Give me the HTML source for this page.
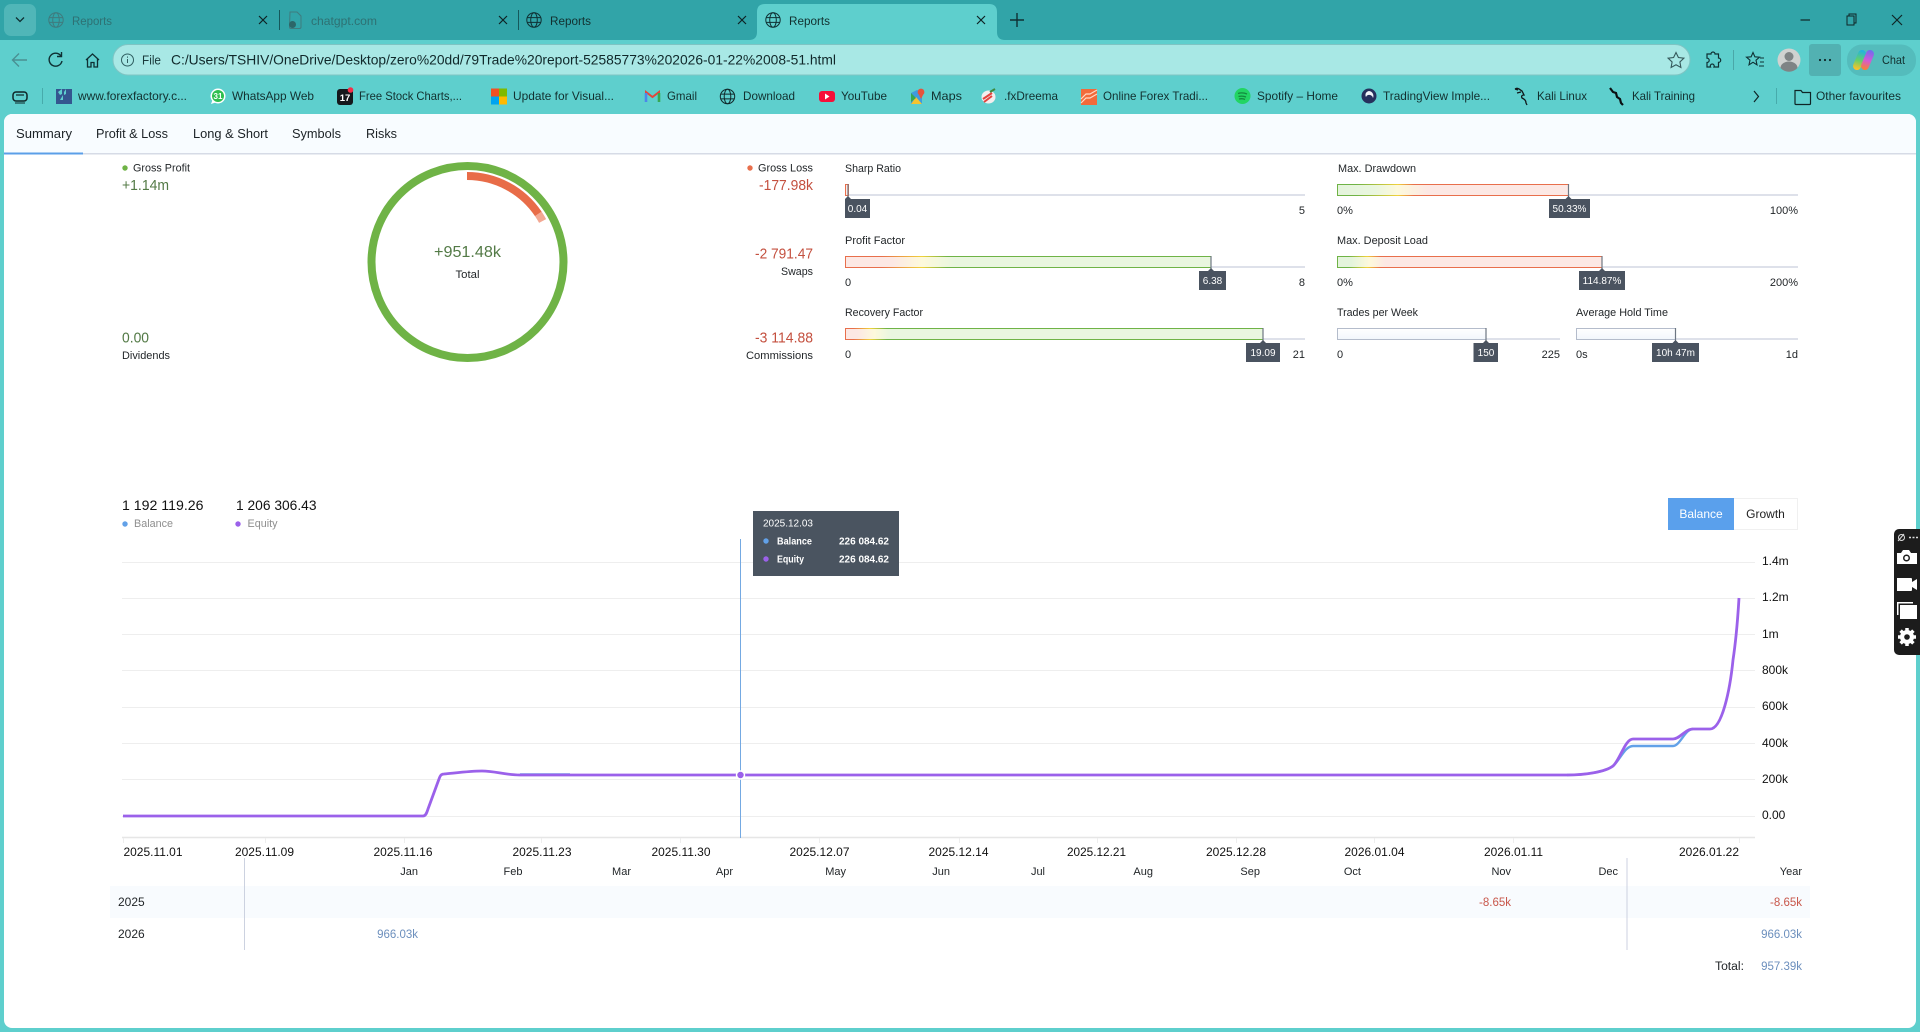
<!DOCTYPE html>
<html><head><meta charset="utf-8"><title>Reports</title>
<style>
html,body{margin:0;padding:0;background:#fff;overflow:hidden;width:1920px;height:1032px}
svg{display:block;position:absolute;left:0;top:0}
text{font-family:"Liberation Sans",sans-serif;font-size:11px;fill:#1f2326}
.t{font-size:12px;fill:#12302f}
.nav{font-size:13px;fill:#1c2226}
.g{fill:#537a46;font-size:15px}
.r{fill:#c4503f;font-size:15px}
.w{fill:#fff;font-size:10px}
.ax{font-size:12px;fill:#111}
.blu{fill:#6c8fbd;font-size:11.5px}
.red{fill:#c8574b;font-size:11.5px}
</style></head><body>
<svg width="1920" height="1032" viewBox="0 0 1920 1032" xmlns="http://www.w3.org/2000/svg">
<defs>
<symbol id="globe" viewBox="0 0 16 16" overflow="visible"><g fill="none" stroke-width="1"><circle cx="8" cy="8" r="7.2"/><ellipse cx="8" cy="8" rx="3.3" ry="7.2"/><path d="M1 5.6H15M1 10.4H15"/></g></symbol>
<linearGradient id="fPF" gradientUnits="userSpaceOnUse" x1="845" x2="1211"><stop offset=".13" stop-color="#fce8e4"/><stop offset=".21" stop-color="#fdf9dc"/><stop offset=".3" stop-color="#e9f6df"/></linearGradient>
<linearGradient id="sPF" gradientUnits="userSpaceOnUse" x1="845" x2="1211"><stop offset=".1" stop-color="#e86f4c"/><stop offset=".21" stop-color="#f0d23c"/><stop offset=".28" stop-color="#6fb346"/></linearGradient>
<linearGradient id="fRF" gradientUnits="userSpaceOnUse" x1="845" x2="1263"><stop offset=".03" stop-color="#fce8e4"/><stop offset=".07" stop-color="#fdf9dc"/><stop offset=".11" stop-color="#e9f6df"/></linearGradient>
<linearGradient id="sRF" gradientUnits="userSpaceOnUse" x1="845" x2="1263"><stop offset=".02" stop-color="#e86f4c"/><stop offset=".06" stop-color="#f0d23c"/><stop offset=".1" stop-color="#6fb346"/></linearGradient>
<linearGradient id="fMD" gradientUnits="userSpaceOnUse" x1="1338" x2="1568"><stop offset="0" stop-color="#e4f4dc"/><stop offset=".16" stop-color="#e9f6df"/><stop offset=".26" stop-color="#fdf9dc"/><stop offset=".39" stop-color="#fce8e4"/></linearGradient>
<linearGradient id="sMD" gradientUnits="userSpaceOnUse" x1="1338" x2="1568"><stop offset=".08" stop-color="#6fb346"/><stop offset=".26" stop-color="#f0d23c"/><stop offset=".33" stop-color="#e86f4c"/></linearGradient>
<linearGradient id="fDL" gradientUnits="userSpaceOnUse" x1="1338" x2="1602"><stop offset=".05" stop-color="#e4f4dc"/><stop offset=".12" stop-color="#fdf9dc"/><stop offset=".18" stop-color="#fce8e4"/></linearGradient>
<linearGradient id="sDL" gradientUnits="userSpaceOnUse" x1="1338" x2="1602"><stop offset=".04" stop-color="#6fb346"/><stop offset=".11" stop-color="#f0d23c"/><stop offset=".16" stop-color="#e86f4c"/></linearGradient>
<linearGradient id="fN" x1="0" x2="0" y1="0" y2="1"><stop offset="0" stop-color="#fff"/><stop offset="1" stop-color="#f2f6fc"/></linearGradient>
<linearGradient id="cop" gradientUnits="userSpaceOnUse" x1="1862" y1="50" x2="1857" y2="69"><stop offset="0" stop-color="#1fb2e6"/><stop offset=".55" stop-color="#64d06a"/><stop offset="1" stop-color="#f8c22a"/></linearGradient>
<linearGradient id="cop2" gradientUnits="userSpaceOnUse" x1="1870" y1="50" x2="1865" y2="69"><stop offset="0" stop-color="#6e6cf0"/><stop offset=".55" stop-color="#d25ad6"/><stop offset="1" stop-color="#f5803a"/></linearGradient>
</defs>

<!-- chrome background -->
<rect width="1920" height="1032" fill="#5ecfcd"/>
<rect width="1920" height="40" fill="#31a4a8"/>

<!-- tabs -->
<rect x="4" y="4" width="32" height="32" rx="7" fill="#50b6b8"/>
<path d="M16 17.5l4 4 4-4" fill="none" stroke="#0f3033" stroke-width="1.3"/>
<use href="#globe" x="48" y="12" width="16" height="16" stroke="#3f7b7e"/>
<text x="72" y="25" class="t" style="fill:#2e7173" textLength="40" lengthAdjust="spacingAndGlyphs">Reports</text>
<path d="M259 16l8 8M267 16l-8 8" stroke="#0e2224" stroke-width="1.2"/>
<path d="M279.500 10V30" stroke="#15585b"/>
<path d="M290 12h7l4 4v11a1.500 1.500 0 0 1-1.500 1.500H291a1.500 1.500 0 0 1-1.500-1.500z" fill="none" stroke="#3f7b7e"/>
<circle cx="292.500" cy="24.500" r="3.500" fill="#2c6668"/>
<text x="311" y="25" class="t" style="fill:#2e7173" textLength="66" lengthAdjust="spacingAndGlyphs">chatgpt.com</text>
<path d="M499 16l8 8M507 16l-8 8" stroke="#0e2224" stroke-width="1.2"/>
<path d="M518.500 10V30" stroke="#15585b"/>
<use href="#globe" x="526" y="12" width="16" height="16" stroke="#0f3033"/>
<text x="550" y="25" class="t" textLength="41" lengthAdjust="spacingAndGlyphs">Reports</text>
<path d="M738 16l8 8M746 16l-8 8" stroke="#0e2224" stroke-width="1.2"/>
<path d="M749 40Q757 40 757 32V12Q757 4 765 4H989Q997 4 997 12V32Q997 40 1005 40Z" fill="#5ecfcd"/>
<use href="#globe" x="765" y="12" width="16" height="16" stroke="#0f3033"/>
<text x="789" y="25" class="t" textLength="41" lengthAdjust="spacingAndGlyphs">Reports</text>
<path d="M977 16l8 8M985 16l-8 8" stroke="#0e2224" stroke-width="1.2"/>
<path d="M1017 13V27M1010 20H1024" stroke="#0f3033" stroke-width="1.4"/>
<!-- window controls -->
<path d="M1800.500 20H1810" stroke="#0f2526" stroke-width="1.200"/>
<path d="M1847 16h7v9h-7zM1849 16v-2h7v9h-2" fill="none" stroke="#0f2526" stroke-width="1"/>
<path d="M1892 15l10 10M1902 15l-10 10" stroke="#0f2526" stroke-width="1.200"/>

<!-- nav row -->
<path d="M27 60H13M19 53.500L12.500 60L19 66.500" fill="none" stroke="#4a8f92" stroke-width="1.400"/>
<path d="M61 56a6.500 6.500 0 1 0 1 5M61.500 52v4.500H57" fill="none" stroke="#0f3033" stroke-width="1.400"/>
<path d="M86 60l6.500-6 6.500 6M87.500 59v8h3.500v-4.500h3V67h3.500v-8" fill="none" stroke="#0f3033" stroke-width="1.300"/>
<rect x="113" y="44.500" width="1577" height="30.500" rx="15" fill="#a8e8e5" stroke="#7fc4c3"/>
<circle cx="127.500" cy="60" r="6" fill="none" stroke="#2f5e60"/><path d="M127.500 59v4M127.500 56.500v1.200" stroke="#2f5e60"/>
<text x="142" y="64.500" style="font-size:12.500px;fill:#1a3a3b" textLength="19" lengthAdjust="spacingAndGlyphs">File</text>
<text x="171" y="64.500" style="font-size:14px;fill:#10282a" textLength="665" lengthAdjust="spacingAndGlyphs">C:/Users/TSHIV/OneDrive/Desktop/zero%20dd/79Trade%20report-52585773%202026-01-22%2008-51.html</text>
<path d="M1676 52.500l2.400 5 5.500.700-4 3.800 1 5.500-4.900-2.700-4.900 2.700 1-5.500-4-3.800 5.500-.700z" fill="none" stroke="#35595b" stroke-width="1.100"/>
<path d="M1707 54h4a2 2 0 1 1 4 0h3.500v4a2.200 2.200 0 1 1 0 4.400V67H1714a2 2 0 1 0-3.500 0H1707v-4.500a2.200 2.200 0 1 0 0-4.400z" fill="none" stroke="#0f3033" stroke-width="1.200"/>
<path d="M1733.500 50V70" stroke="#4aa7a8"/>
<path d="M1753 52.500l1.900 4.300 4.600.400-3.500 3 1 4.600-4-2.500-4 2.500 1-4.600-3.500-3 4.600-.400zM1760 58h4M1760 62h4M1759 66h5" fill="none" stroke="#0f3033" stroke-width="1.100"/>
<circle cx="1789" cy="60" r="11.500" fill="#d0d2d0"/><circle cx="1789" cy="56.500" r="4.500" fill="#7f8485"/><path d="M1780.500 68a8.500 6.500 0 0 1 17 0a11.500 11.500 0 0 1-17 0z" fill="#7f8485"/>
<rect x="1809" y="44" width="32" height="32" rx="3" fill="#52b1b2"/>
<circle cx="1820" cy="60" r="1.100" fill="#10282a"/><circle cx="1825" cy="60" r="1.100" fill="#10282a"/><circle cx="1830" cy="60" r="1.100" fill="#10282a"/>
<rect x="1847" y="44.500" width="69" height="31.500" rx="15" fill="#54bcbc"/>
<path d="M1862 54L1857 66" fill="none" stroke="url(#cop)" stroke-width="8" stroke-linecap="round"/>
<path d="M1870 54L1865 66" fill="none" stroke="url(#cop2)" stroke-width="8" stroke-linecap="round"/>
<text x="1882" y="64" class="t" textLength="23" lengthAdjust="spacingAndGlyphs">Chat</text>

<!-- bookmarks -->
<rect x="13" y="92" width="14" height="9" rx="3" fill="none" stroke="#0f2526" stroke-width="1.500"/><path d="M16 95h8" stroke="#0f2526" stroke-width="1.200"/><path d="M15 103h10" stroke="#0f2526" stroke-width="1"/>
<path d="M42.500 88V104" stroke="#47abab"/>
<rect x="56" y="89" width="16" height="15" fill="#34568f"/><path d="M58 92l4-3v5l-2 1zM60 100l3-5v5zM66 89v5l-2 1v-3z" fill="#5fd0cf"/>
<text x="78" y="100" class="t" textLength="109" lengthAdjust="spacingAndGlyphs">www.forexfactory.c...</text>
<circle cx="218" cy="96" r="7.500" fill="#fff"/><circle cx="218" cy="96" r="6" fill="#2fbf4f"/><path d="M211 104l1.500-4 3 2.500z" fill="#fff"/>
<text x="218" y="99" style="font-size:8px;font-weight:bold;fill:#fff" text-anchor="middle">31</text>
<text x="232" y="100" class="t" textLength="82" lengthAdjust="spacingAndGlyphs">WhatsApp Web</text>
<rect x="337" y="89" width="16" height="16" rx="3" fill="#15181c"/><circle cx="350.500" cy="90" r="2.800" fill="#f3304a"/>
<text x="345" y="101" style="font-size:9.500px;font-weight:bold;fill:#fff" text-anchor="middle">17</text>
<text x="359" y="100" class="t" textLength="103" lengthAdjust="spacingAndGlyphs">Free Stock Charts,...</text>
<rect x="491" y="88.500" width="8" height="8" fill="#f25022"/><rect x="499" y="88.500" width="8" height="8" fill="#7fba00"/><rect x="491" y="96.500" width="8" height="8" fill="#00a4ef"/><rect x="499" y="96.500" width="8" height="8" fill="#ffb900"/>
<text x="513" y="100" class="t" textLength="101" lengthAdjust="spacingAndGlyphs">Update for Visual...</text>
<path d="M646 102V92l6.500 5 6.500-5v10" fill="none" stroke="#e5453a" stroke-width="2"/><path d="M646 93v9" stroke="#4b88ea" stroke-width="2.600"/><path d="M659 93v9" stroke="#36a853" stroke-width="2.600"/>
<text x="667" y="100" class="t" textLength="30" lengthAdjust="spacingAndGlyphs">Gmail</text>
<use href="#globe" x="719.500" y="88.500" width="16" height="16" stroke="#10282a"/>
<text x="743" y="100" class="t" textLength="52" lengthAdjust="spacingAndGlyphs">Download</text>
<rect x="819" y="91" width="16" height="11" rx="3" fill="#f70f39"/><path d="M825 93.500l4.500 3-4.500 3z" fill="#fff"/>
<text x="841" y="100" class="t" textLength="46" lengthAdjust="spacingAndGlyphs">YouTube</text>
<path d="M911 93l6-3 5 2v12l-6-2-5 2z" fill="#3f9bde"/><path d="M911 104l5-7 6 7z" fill="#f4c430"/><path d="M911 93l5 5-5 4z" fill="#35a853"/><circle cx="921" cy="92" r="3.400" fill="#e5533d"/><path d="M918.500 94l2.500 5 2.500-5z" fill="#e5533d"/>
<text x="931" y="100" class="t" textLength="31" lengthAdjust="spacingAndGlyphs">Maps</text>
<ellipse cx="988.500" cy="97" rx="7" ry="6.500" fill="#f3eeee"/><path d="M983 99l9-6M984 102l8-6" stroke="#e5433d" stroke-width="2"/><path d="M990 92l5-3" stroke="#3e8a3f" stroke-width="2"/>
<text x="1004" y="100" class="t" textLength="54" lengthAdjust="spacingAndGlyphs">.fxDreema</text>
<rect x="1081" y="89" width="16" height="16" fill="#f26a3b"/><path d="M1081 99l5-5h4l7-4M1081 103l5-5h4l7-4" fill="none" stroke="#ffd9c6" stroke-width="1.200"/>
<text x="1103" y="100" class="t" textLength="105" lengthAdjust="spacingAndGlyphs">Online Forex Tradi...</text>
<circle cx="1242.500" cy="96" r="8" fill="#22d563"/><path d="M1238 93.500q4.500-1.500 9 .5M1238.500 96.500q4-1 7.500.5M1239 99q3.500-.8 6 .5" fill="none" stroke="#128a3e" stroke-width="1.300"/>
<text x="1257" y="100" class="t" textLength="81" lengthAdjust="spacingAndGlyphs">Spotify – Home</text>
<circle cx="1369" cy="96" r="7.500" fill="#26305c"/><path d="M1369 91a5 5 0 0 1 4 7a4 4 0 0 0-5-3 3 3 0 0 0-2 2 4 4 0 0 1 3-6z" fill="#f2f4f8"/>
<text x="1383" y="100" class="t" textLength="107" lengthAdjust="spacingAndGlyphs">TradingView Imple...</text>
<path d="M1515 89c3-2 5 1 7 2l2 4c-2 0-3 1-2 3 2 1 4 2 4 5l1 2M1515 89l3 1M1517 93l4-1" fill="none" stroke="#10181a" stroke-width="1.300"/>
<text x="1537" y="100" class="t" textLength="50" lengthAdjust="spacingAndGlyphs">Kali Linux</text>
<path d="M1610 88l3 4 3 1 1 4 3 2 1 4 2 2" fill="none" stroke="#0b1012" stroke-width="2.200"/>
<text x="1632" y="100" class="t" textLength="63" lengthAdjust="spacingAndGlyphs">Kali Training</text>
<path d="M1754 91l4.500 5.500-4.500 5.500" fill="none" stroke="#0f2526" stroke-width="1.200"/>
<path d="M1776.500 88V104" stroke="#47abab"/>
<path d="M1795 90.500h6l1.500 2h8v11a1 1 0 0 1-1 1h-13.500a1 1 0 0 1-1-1z" fill="none" stroke="#0f2526" stroke-width="1.200"/>
<text x="1816" y="100" class="t" textLength="85" lengthAdjust="spacingAndGlyphs">Other favourites</text>

<!-- content -->
<path d="M12 114H1908a8 8 0 0 1 8 8V1020a8 8 0 0 1-8 8H12a8 8 0 0 1-8-8V122a8 8 0 0 1 8-8z" fill="#fff"/>
<path d="M4 153V122a8 8 0 0 1 8-8H1908a8 8 0 0 1 8 8V153z" fill="#f8fcff"/>
<rect x="4" y="153" width="1912" height="1.500" fill="#d6dbe6"/>
<rect x="4" y="152.500" width="79" height="2" fill="#5b9fe8"/>
<text x="16" y="138" class="nav" textLength="56" lengthAdjust="spacingAndGlyphs">Summary</text>
<text x="96" y="138" class="nav" textLength="72" lengthAdjust="spacingAndGlyphs">Profit &amp; Loss</text>
<text x="193" y="138" class="nav" textLength="75" lengthAdjust="spacingAndGlyphs">Long &amp; Short</text>
<text x="292" y="138" class="nav" textLength="49" lengthAdjust="spacingAndGlyphs">Symbols</text>
<text x="366" y="138" class="nav" textLength="31" lengthAdjust="spacingAndGlyphs">Risks</text>

<!-- left column -->
<circle cx="125" cy="168" r="2.700" fill="#6fb346"/>
<text x="133" y="171.500" textLength="57" lengthAdjust="spacingAndGlyphs">Gross Profit</text>
<text x="122" y="190" class="g" textLength="47" lengthAdjust="spacingAndGlyphs">+1.14m</text>
<text x="122" y="342.500" class="g" textLength="27" lengthAdjust="spacingAndGlyphs">0.00</text>
<text x="122" y="359" textLength="48" lengthAdjust="spacingAndGlyphs">Dividends</text>
<circle cx="750" cy="168" r="2.700" fill="#e86f4c"/>
<text x="758" y="171.500" textLength="55" lengthAdjust="spacingAndGlyphs">Gross Loss</text>
<text x="759" y="190" class="r" textLength="54" lengthAdjust="spacingAndGlyphs">-177.98k</text>
<text x="755" y="258.500" class="r" textLength="58" lengthAdjust="spacingAndGlyphs">-2 791.47</text>
<text x="781" y="275" textLength="32" lengthAdjust="spacingAndGlyphs">Swaps</text>
<text x="755" y="342.500" class="r" textLength="58" lengthAdjust="spacingAndGlyphs">-3 114.88</text>
<text x="746" y="359" textLength="67" lengthAdjust="spacingAndGlyphs">Commissions</text>

<!-- donut -->
<circle cx="467.500" cy="262" r="96" fill="none" stroke="#6fb346" stroke-width="8"/>
<path d="M538.300 213.900A86 86 0 0 1 542.600 221" fill="none" stroke="#f3a893" stroke-width="8"/>
<path d="M467 176A86 86 0 0 1 538.300 213.900" fill="none" stroke="#e86c48" stroke-width="8"/>
<text x="434" y="257" style="font-size:16px;fill:#537a46" textLength="67" lengthAdjust="spacingAndGlyphs">+951.48k</text>
<text x="455.500" y="278" textLength="24" lengthAdjust="spacingAndGlyphs">Total</text>

<!-- Sharp -->
<text x="845" y="172" textLength="56" lengthAdjust="spacingAndGlyphs">Sharp Ratio</text>
<path d="M845 195H1305" stroke="#d3d7e4" stroke-width="1.500"/>
<rect x="845.500" y="184.500" width="3" height="11" fill="#fde8e3" stroke="#e86f4c"/>
<path d="M848 184V199" stroke="#6d7682" stroke-width="1.200"/>
<rect x="845" y="199" width="25" height="19" fill="#4a5360"/><path d="M845 199l3-3 3 3z" fill="#4a5360"/>
<text x="857.500" y="212" class="w" text-anchor="middle">0.04</text>
<text x="1305" y="214" text-anchor="end">5</text>
<!-- Profit Factor -->
<text x="845" y="244" textLength="60" lengthAdjust="spacingAndGlyphs">Profit Factor</text>
<path d="M845 267H1305" stroke="#d3d7e4" stroke-width="1.500"/>
<rect x="845.500" y="256.500" width="365.500" height="11" fill="url(#fPF)" stroke="url(#sPF)"/>
<path d="M1211 256V271" stroke="#6d7682" stroke-width="1.200"/>
<rect x="1199" y="271" width="27" height="19" fill="#4a5360"/><path d="M1208 271l3-3 3 3z" fill="#4a5360"/>
<text x="1212.500" y="284" class="w" text-anchor="middle">6.38</text>
<text x="845" y="286">0</text><text x="1305" y="286" text-anchor="end">8</text>
<!-- Recovery -->
<text x="845" y="316" textLength="78" lengthAdjust="spacingAndGlyphs">Recovery Factor</text>
<path d="M845 339H1305" stroke="#d3d7e4" stroke-width="1.500"/>
<rect x="845.500" y="328.500" width="417.500" height="11" fill="url(#fRF)" stroke="url(#sRF)"/>
<path d="M1263 328V343" stroke="#6d7682" stroke-width="1.200"/>
<rect x="1246" y="343" width="34" height="19" fill="#4a5360"/><path d="M1260 343l3-3 3 3z" fill="#4a5360"/>
<text x="1263" y="356" class="w" text-anchor="middle">19.09</text>
<text x="845" y="358">0</text><text x="1305" y="358" text-anchor="end">21</text>
<!-- Drawdown -->
<text x="1338" y="172" textLength="78" lengthAdjust="spacingAndGlyphs">Max. Drawdown</text>
<path d="M1338 195H1798" stroke="#d3d7e4" stroke-width="1.500"/>
<rect x="1337.500" y="184.500" width="231" height="11" fill="url(#fMD)" stroke="url(#sMD)"/>
<path d="M1568.500 184V199" stroke="#6d7682" stroke-width="1.200"/>
<rect x="1549" y="199" width="41" height="19" fill="#4a5360"/><path d="M1565.500 199l3-3 3 3z" fill="#4a5360"/>
<text x="1569.500" y="212" class="w" text-anchor="middle">50.33%</text>
<text x="1337" y="214">0%</text><text x="1798" y="214" text-anchor="end">100%</text>
<!-- Deposit -->
<text x="1337" y="244" textLength="91" lengthAdjust="spacingAndGlyphs">Max. Deposit Load</text>
<path d="M1338 267H1798" stroke="#d3d7e4" stroke-width="1.500"/>
<rect x="1337.500" y="256.500" width="264.500" height="11" fill="url(#fDL)" stroke="url(#sDL)"/>
<path d="M1602 256V271" stroke="#6d7682" stroke-width="1.200"/>
<rect x="1579" y="271" width="46" height="19" fill="#4a5360"/><path d="M1599 271l3-3 3 3z" fill="#4a5360"/>
<text x="1602" y="284" class="w" text-anchor="middle">114.87%</text>
<text x="1337" y="286">0%</text><text x="1798" y="286" text-anchor="end">200%</text>
<!-- Trades -->
<text x="1337" y="316" textLength="81" lengthAdjust="spacingAndGlyphs">Trades per Week</text>
<path d="M1338 339H1560" stroke="#d3d7e4" stroke-width="1.500"/>
<rect x="1337.500" y="328.500" width="148.500" height="11" fill="url(#fN)" stroke="#b4bccb"/>
<path d="M1486 328V343" stroke="#6d7682" stroke-width="1.200"/>
<rect x="1473.500" y="343" width="24.500" height="19" fill="#4a5360"/><path d="M1483 343l3-3 3 3z" fill="#4a5360"/>
<text x="1486" y="356" class="w" text-anchor="middle">150</text>
<text x="1337" y="358">0</text><text x="1560" y="358" text-anchor="end">225</text>
<!-- Hold -->
<text x="1576" y="316" textLength="92" lengthAdjust="spacingAndGlyphs">Average Hold Time</text>
<path d="M1576 339H1798" stroke="#d3d7e4" stroke-width="1.500"/>
<rect x="1576.500" y="328.500" width="99" height="11" fill="url(#fN)" stroke="#b4bccb"/>
<path d="M1675.500 328V343" stroke="#6d7682" stroke-width="1.200"/>
<rect x="1652" y="343" width="47" height="19" fill="#4a5360"/><path d="M1672.500 343l3-3 3 3z" fill="#4a5360"/>
<text x="1675.500" y="356" class="w" text-anchor="middle">10h 47m</text>
<text x="1576" y="358">0s</text><text x="1798" y="358" text-anchor="end">1d</text>

<!-- chart header -->
<text x="122" y="510" style="font-size:14px;fill:#111" textLength="81.500" lengthAdjust="spacingAndGlyphs">1 192 119.26</text>
<text x="236" y="510" style="font-size:14px;fill:#111" textLength="80.500" lengthAdjust="spacingAndGlyphs">1 206 306.43</text>
<circle cx="125" cy="524" r="2.700" fill="#62a1e8"/><text x="134" y="527" style="fill:#8e8e8e" textLength="39" lengthAdjust="spacingAndGlyphs">Balance</text>
<circle cx="238" cy="524" r="2.700" fill="#9b61ea"/><text x="247.500" y="527" style="fill:#8e8e8e" textLength="30" lengthAdjust="spacingAndGlyphs">Equity</text>

<rect x="1668" y="498" width="66" height="32" fill="#5aa0ec"/>
<path d="M1734 498.500H1797.500V529.500H1734" fill="#fff" stroke="#f0f0f0"/>
<text x="1701" y="518" style="font-size:12px;fill:#fff" text-anchor="middle">Balance</text>
<text x="1765.500" y="518" style="font-size:12px;fill:#222" text-anchor="middle">Growth</text>

<!-- grid -->
<g stroke="#eeeeee" stroke-width="1">
<path d="M122 562.500H1755M122 598.500H1755M122 634.500H1755M122 670.500H1755M122 707.500H1755M122 743.500H1755M122 779.500H1755M122 816.500H1755"/>
<path d="M122 837.500H1755" stroke="#e6e6e6" stroke-width="1.500"/>
<path d="M123.500 838V843M265.500 838V843M404.500 838V843M541.500 838V843M680.500 838V843M819.500 838V843M959.500 838V843M1097.500 838V843M1236.500 838V843M1374.500 838V843M1513.500 838V843M1739.500 838V843"/>
</g>
<text class="ax" x="1762" y="565">1.4m</text>
<text class="ax" x="1762" y="601">1.2m</text>
<text class="ax" x="1762" y="638">1m</text>
<text class="ax" x="1762" y="674">800k</text>
<text class="ax" x="1762" y="710">600k</text>
<text class="ax" x="1762" y="747">400k</text>
<text class="ax" x="1762" y="783">200k</text>
<text class="ax" x="1762" y="819">0.00</text>
<!-- crosshair & series -->
<path d="M740.500 539V838" stroke="#74a9e2" stroke-width="1"/>
<path d="M520 774.500H570M1567 775C1585 775 1605 772 1613 766C1620 760 1625 746 1633 746H1673C1680 746 1685 729 1693 729" fill="none" stroke="#62a1e8" stroke-width="2.400"/>
<path d="M123 816H423C426 816 427 812 428 809L439 779C440 776 441 774 444 774C455 773 470 771 482 771C495 771 505 775 520 775H1567C1585 775 1605 772 1613 766C1620 760 1625 739 1633 739H1673C1680 739 1685 729 1693 729H1710C1722 729 1730 690 1733 660C1736 640 1738 615 1739 598" fill="none" stroke="#9b61ea" stroke-width="2.800"/>
<circle cx="740.500" cy="775" r="4" fill="#9b61ea" stroke="#fff" stroke-width="1.500"/>

<!-- tooltip -->
<rect x="753" y="511" width="146" height="65" fill="#4a5460"/>
<text x="763" y="526.500" style="font-size:10px;fill:#fff" textLength="50" lengthAdjust="spacingAndGlyphs">2025.12.03</text>
<circle cx="766" cy="541" r="2.700" fill="#62a1e8"/>
<text x="777" y="544.500" style="font-size:10px;fill:#fff;font-weight:bold" textLength="35" lengthAdjust="spacingAndGlyphs">Balance</text>
<text x="839" y="544.500" style="font-size:10px;fill:#fff;font-weight:bold" textLength="50" lengthAdjust="spacingAndGlyphs">226 084.62</text>
<circle cx="766" cy="559" r="2.700" fill="#9b61ea"/>
<text x="777" y="562.500" style="font-size:10px;fill:#fff;font-weight:bold" textLength="27" lengthAdjust="spacingAndGlyphs">Equity</text>
<text x="839" y="562.500" style="font-size:10px;fill:#fff;font-weight:bold" textLength="50" lengthAdjust="spacingAndGlyphs">226 084.62</text>

<!-- x labels -->
<text class="ax" x="123.500" y="856" textLength="59" lengthAdjust="spacingAndGlyphs">2025.11.01</text>
<text class="ax" x="235" y="856" textLength="59" lengthAdjust="spacingAndGlyphs">2025.11.09</text>
<text class="ax" x="373.500" y="856" textLength="59" lengthAdjust="spacingAndGlyphs">2025.11.16</text>
<text class="ax" x="512.500" y="856" textLength="59" lengthAdjust="spacingAndGlyphs">2025.11.23</text>
<text class="ax" x="651.500" y="856" textLength="59" lengthAdjust="spacingAndGlyphs">2025.11.30</text>
<text class="ax" x="789.500" y="856" textLength="60" lengthAdjust="spacingAndGlyphs">2025.12.07</text>
<text class="ax" x="928.500" y="856" textLength="60" lengthAdjust="spacingAndGlyphs">2025.12.14</text>
<text class="ax" x="1067" y="856" textLength="59" lengthAdjust="spacingAndGlyphs">2025.12.21</text>
<text class="ax" x="1206" y="856" textLength="60" lengthAdjust="spacingAndGlyphs">2025.12.28</text>
<text class="ax" x="1344.500" y="856" textLength="60" lengthAdjust="spacingAndGlyphs">2026.01.04</text>
<text class="ax" x="1484" y="856" textLength="59" lengthAdjust="spacingAndGlyphs">2026.01.11</text>
<text class="ax" x="1679" y="856" textLength="60" lengthAdjust="spacingAndGlyphs">2026.01.22</text>

<!-- table -->
<rect x="110" y="886" width="1700" height="32" fill="#f8fbfe"/>
<path d="M244.500 858V950M1627 858V950" stroke="#ccd2e0"/>
<g text-anchor="end">
<text x="418" y="875">Jan</text><text x="522.500" y="875">Feb</text><text x="631" y="875">Mar</text><text x="733" y="875">Apr</text><text x="846" y="875">May</text><text x="950" y="875">Jun</text><text x="1045" y="875">Jul</text><text x="1153" y="875">Aug</text><text x="1260" y="875">Sep</text><text x="1361" y="875">Oct</text><text x="1511" y="875">Nov</text><text x="1618" y="875">Dec</text><text x="1802" y="875">Year</text>
</g>
<text x="118" y="906" style="font-size:12px">2025</text>
<text x="118" y="938" style="font-size:12px">2026</text>
<text class="blu" x="418" y="938" text-anchor="end">966.03k</text>
<text class="red" x="1511" y="906" text-anchor="end">-8.65k</text>
<text class="red" x="1802" y="906" text-anchor="end">-8.65k</text>
<text class="blu" x="1802" y="938" text-anchor="end">966.03k</text>
<text x="1715" y="970" style="font-size:11.500px" textLength="29" lengthAdjust="spacingAndGlyphs">Total:</text>
<text class="blu" x="1802" y="970" text-anchor="end">957.39k</text>

<!-- recorder widget -->
<path d="M1899 529H1920V655H1899a5 5 0 0 1-5-5V534a5 5 0 0 1 5-5z" fill="#1c1c1c"/>
<circle cx="1901.500" cy="537.500" r="3" fill="none" stroke="#ddd"/><path d="M1898 541l6-7" stroke="#ddd"/>
<path d="M1909 537.500h2M1912.500 537.500h2M1916 537.500h2" stroke="#ddd" stroke-width="1.500"/>
<path d="M1897 553h4l2-3h6l2 3h6v11h-20z" fill="#fff"/><circle cx="1906.500" cy="558" r="3.500" fill="#1c1c1c"/><circle cx="1906.500" cy="558" r="2" fill="#fff"/>
<path d="M1897 578h14a1 1 0 0 1 1 1v3l5-3v11l-5-3v3a1 1 0 0 1-1 1h-14z" fill="#fff"/>
<path d="M1897 602h16v1.500h-14.500V615H1897z" fill="#fff"/><rect x="1900" y="605" width="17" height="14" fill="#fff"/>
<path d="M1907 628V646M1898 637H1916M1900.600 630.600L1913.400 643.400M1913.400 630.600L1900.600 643.400" stroke="#fff" stroke-width="3.500"/>
<circle cx="1907" cy="637" r="7" fill="#fff"/>
<circle cx="1907" cy="637" r="2.800" fill="#1c1c1c"/>
</svg>
</body></html>
